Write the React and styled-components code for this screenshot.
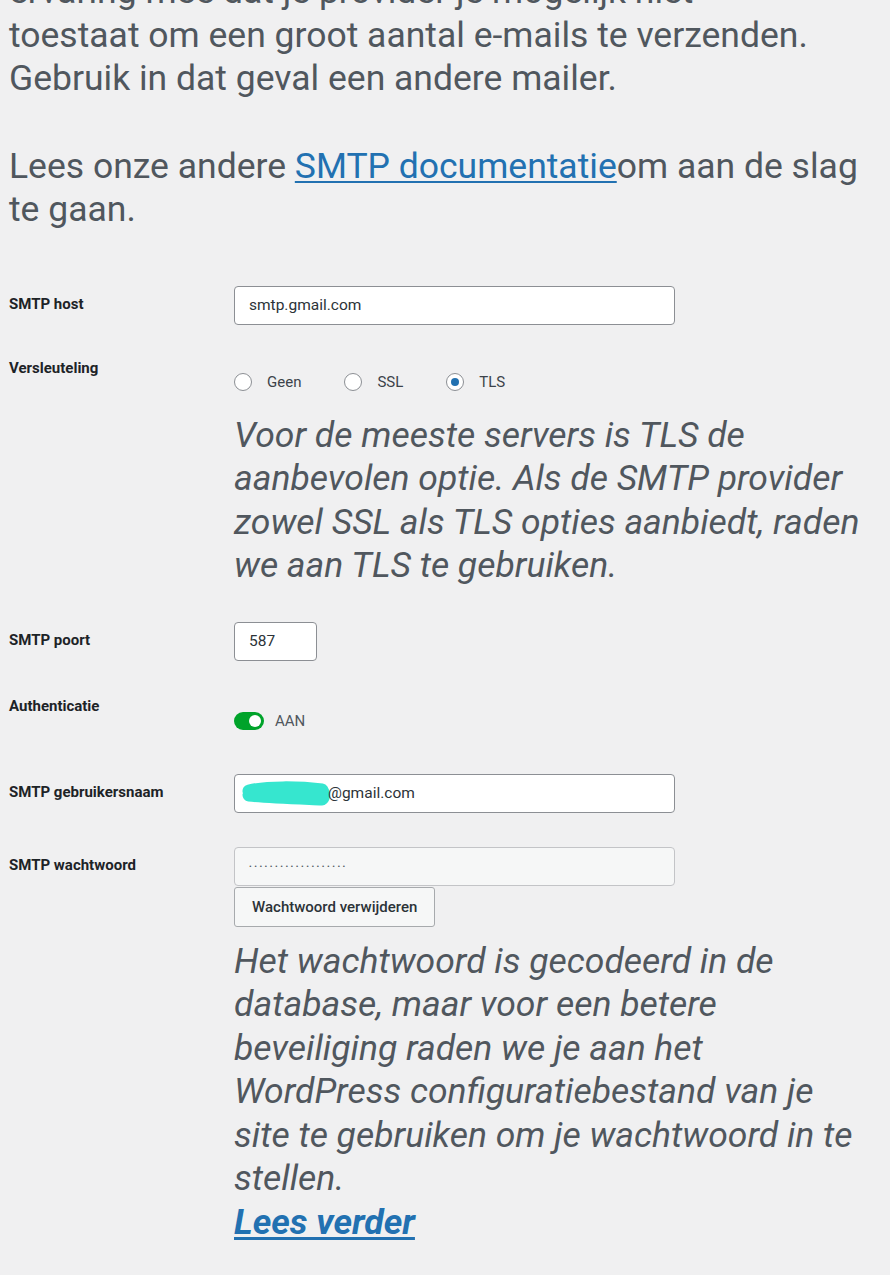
import React from 'react';
import styled, { createGlobalStyle } from 'styled-components';

const Global = createGlobalStyle`
  html, body {
    margin: 0;
    padding: 0;
    background: #f0f0f1;
    overflow: hidden;
  }
  body {
    font-family: Roboto, "Noto Sans", sans-serif;
    color: #3c434a;
  }
`;

const Page = styled.div`
  display: flex;
  flex-direction: column;
  padding: 0 16px 0 9px;
  margin-top: -30px;
`;

const Intro = styled.p`
  margin: 0 0 44px;
  font-size: 35.5px;
  line-height: 43.5px;
  color: #50575e;
`;

const DocLink = styled.a`
  color: #2271b1;
  text-decoration: underline;
  text-underline-offset: 3px;
  text-decoration-thickness: 2px;
`;

const Row = styled.div`
  display: grid;
  grid-template-columns: 225px 1fr;
  align-items: start;
  margin-top: ${p => p.$top}px;
`;

const Label = styled.div`
  padding-top: 8px;
  font-size: 15px;
  line-height: 20px;
  font-weight: 700;
  color: #1d2327;
`;

const Cell = styled.div`
  display: flex;
  flex-direction: column;
  align-items: flex-start;
`;

const Field = styled.div`
  box-sizing: border-box;
  width: ${p => p.$width}px;
  height: 39px;
  display: flex;
  align-items: center;
  padding: 0 14px;
  border: 1px solid ${p => (p.$muted ? '#c3c4c7' : '#8c8f94')};
  border-radius: 4px;
  background: ${p => (p.$muted ? '#f6f7f7' : '#fff')};
  font-size: 15.5px;
  color: #2c3338;
`;

const Dots = styled.span`
  font-size: 8px;
  letter-spacing: 2.5px;
  color: #50575e;
`;

const RadioGroup = styled.div`
  display: flex;
  align-items: center;
  height: 20px;
  margin-top: 22px;
`;

const RadioOption = styled.label`
  display: flex;
  align-items: center;
  gap: 15px;
  margin-right: ${p => p.$gap}px;
  font-size: 15px;
  color: #3c434a;
`;

const RadioCircle = styled.span`
  box-sizing: border-box;
  width: 18px;
  height: 18px;
  border-radius: 50%;
  border: 1px solid #8c8f94;
  background: #fff;
  display: flex;
  align-items: center;
  justify-content: center;
  &::after {
    content: '';
    width: 8px;
    height: 8px;
    border-radius: 50%;
    background: ${p => (p.$checked ? '#2271b1' : 'transparent')};
  }
`;

const Help = styled.p`
  margin: ${p => p.$top}px 0 0;
  font-size: 35.5px;
  line-height: 43.5px;
  font-style: italic;
  color: #50575e;
`;

const ReadMore = styled.a`
  display: block;
  font-weight: 700;
  color: #2271b1;
  text-decoration: underline;
  text-underline-offset: 3px;
`;

const ToggleWrap = styled.div`
  display: flex;
  align-items: center;
  gap: 11px;
  margin-top: 24px;
  font-size: 15px;
  color: #50575e;
`;

const Track = styled.span`
  box-sizing: border-box;
  width: 30px;
  height: 18px;
  border-radius: 9px;
  background: #00a32a;
  display: flex;
  align-items: center;
  justify-content: flex-end;
  padding-right: 3px;
  &::after {
    content: '';
    width: 12px;
    height: 12px;
    border-radius: 50%;
    background: #fff;
  }
`;

const Button = styled.button`
  box-sizing: border-box;
  height: 40px;
  padding: 0 17px;
  margin-top: 1px;
  border: 1px solid #a7aaad;
  border-radius: 3px;
  background: #f6f7f7;
  font-family: inherit;
  font-size: 15px;
  font-weight: 500;
  color: #2c3338;
`;

const Blob = () => (
  <svg width="100" height="28" viewBox="0 0 100 28" style={{ marginLeft: -13, marginRight: -8 }}>
    <path
      d="M13 12 C 30 8, 62 8, 86 11 C 88 14, 88 18, 86 20 C 62 19, 30 18, 13 16"
      stroke="#36e6cf"
      strokeWidth="13"
      strokeLinecap="round"
      strokeLinejoin="round"
      fill="#36e6cf"
    />
  </svg>
);

export default function App() {
  return (
    <Page>
      <Global />
      <Intro>
        ervaring mee dat je provider je mogelijk niet<br />
        toestaat om een groot aantal e-mails te verzenden. Gebruik in dat geval een andere mailer.
      </Intro>
      <Intro>
        Lees onze andere <DocLink href="#">SMTP documentatie</DocLink>om aan de slag te gaan.
      </Intro>

      <Row $top={10}>
        <Label>SMTP host</Label>
        <Cell>
          <Field $width={441}>smtp.gmail.com</Field>
        </Cell>
      </Row>

      <Row $top={25}>
        <Label>Versleuteling</Label>
        <Cell>
          <RadioGroup>
            <RadioOption $gap={43}><RadioCircle />Geen</RadioOption>
            <RadioOption $gap={43}><RadioCircle />SSL</RadioOption>
            <RadioOption $gap={0}><RadioCircle $checked />TLS</RadioOption>
          </RadioGroup>
          <Help $top={22}>
            Voor de meeste servers is TLS de aanbevolen optie. Als de SMTP provider zowel SSL als TLS
            opties aanbiedt, raden we aan TLS te gebruiken.
          </Help>
        </Cell>
      </Row>

      <Row $top={34}>
        <Label>SMTP poort</Label>
        <Cell>
          <Field $width={83}>587</Field>
        </Cell>
      </Row>

      <Row $top={27}>
        <Label>Authenticatie</Label>
        <Cell>
          <ToggleWrap>
            <Track />
            AAN
          </ToggleWrap>
        </Cell>
      </Row>

      <Row $top={44}>
        <Label>SMTP gebruikersnaam</Label>
        <Cell>
          <Field $width={441}>
            <Blob />
            @gmail.com
          </Field>
        </Cell>
      </Row>

      <Row $top={34}>
        <Label>SMTP wachtwoord</Label>
        <Cell>
          <Field $width={441} $muted>
            <Dots>•••••••••••••••••••</Dots>
          </Field>
          <Button>Wachtwoord verwijderen</Button>
          <Help $top={13}>
            Het wachtwoord is gecodeerd in de database, maar voor een betere beveiliging raden we je aan
            het WordPress configuratiebestand van je site te gebruiken om je wachtwoord in te stellen.
            <ReadMore href="#">Lees verder</ReadMore>
          </Help>
        </Cell>
      </Row>
    </Page>
  );
}
